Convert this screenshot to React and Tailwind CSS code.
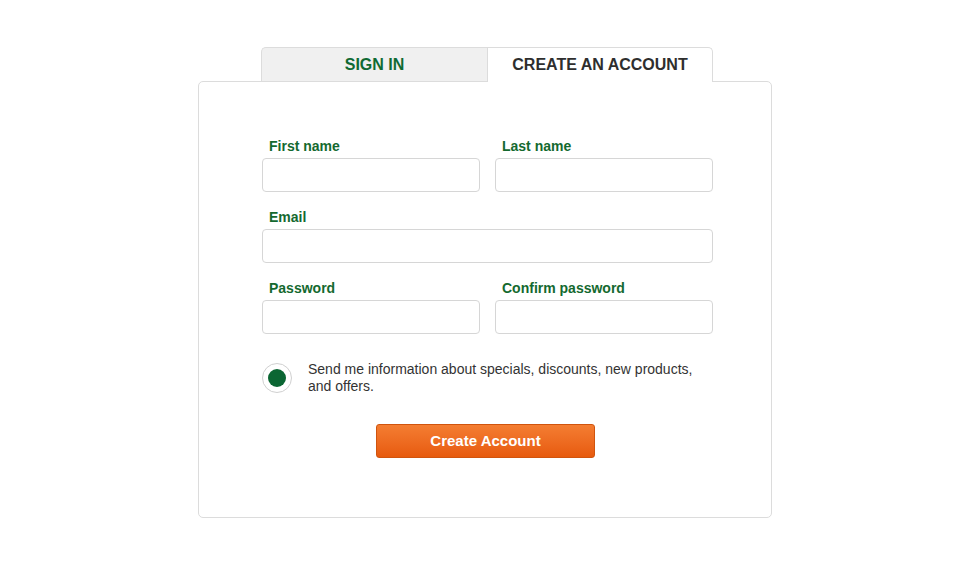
export default function App() {
  const font = { fontFamily: '"Liberation Sans", Arial, sans-serif' };
  const Label = ({ children }) => (
    <label className="block pl-[7px] mb-[3px] text-[14px] leading-[17px] font-bold text-[#14692f]">{children}</label>
  );
  const Input = () => (
    <input className="block w-full h-[34px] rounded-[4px] border border-[#d6d6d6] bg-white outline-none" />
  );
  return (
    <div className="w-[958px] h-[569px] bg-white pt-[47px] pl-[198px]" style={font}>
      <div className="w-[574px]">
        <div className="flex ml-[63px] w-[452px] h-[35px] relative z-10">
          <div className="w-[226px] h-[34px] flex items-center justify-center bg-[#f0f0f0] border border-b-0 border-r-0 border-[#dcdcdc] rounded-tl-[5px] text-[16px] font-bold text-[#0f6a33]">
            SIGN IN
          </div>
          <div className="w-[226px] h-[35px] flex items-center justify-center bg-white border border-b-0 border-[#dcdcdc] rounded-tr-[5px] text-[16px] font-bold text-[#2e2e2e] pb-[1px]">
            CREATE AN ACCOUNT
          </div>
        </div>
        <div className="-mt-[1px] h-[437px] border border-[#dcdcdc] rounded-[5px] pl-[63px] pr-[57px] pt-[56px]">
          <div className="w-[451px]">
            <div className="grid grid-cols-2 gap-x-[15px]">
              <div>
                <Label>First name</Label>
                <Input />
              </div>
              <div>
                <Label>Last name</Label>
                <Input />
              </div>
            </div>
            <div className="mt-[17px]">
              <Label>Email</Label>
              <Input />
            </div>
            <div className="mt-[17px] grid grid-cols-2 gap-x-[15px]">
              <div>
                <Label>Password</Label>
                <Input />
              </div>
              <div>
                <Label>Confirm password</Label>
                <Input />
              </div>
            </div>
            <div className="mt-[27px] flex items-center gap-[16px]">
              <div className="w-[30px] h-[30px] shrink-0 rounded-full border border-[#d0d0d0] flex items-center justify-center">
                <div className="w-[18px] h-[18px] rounded-full bg-[#0b6633]" />
              </div>
              <p className="text-[14px] leading-[17px] text-[#333333] pr-[10px]">
                Send me information about specials, discounts, new products, and offers.
              </p>
            </div>
            <div className="mt-[29px] flex justify-center pr-[4px]">
              <button className="w-[219px] h-[34px] rounded-[3px] border border-[#d0540e] bg-gradient-to-b from-[#f47d31] to-[#e75a0c] text-white text-[15px] font-bold">
                Create Account
              </button>
            </div>
          </div>
        </div>
      </div>
    </div>
  );
}
